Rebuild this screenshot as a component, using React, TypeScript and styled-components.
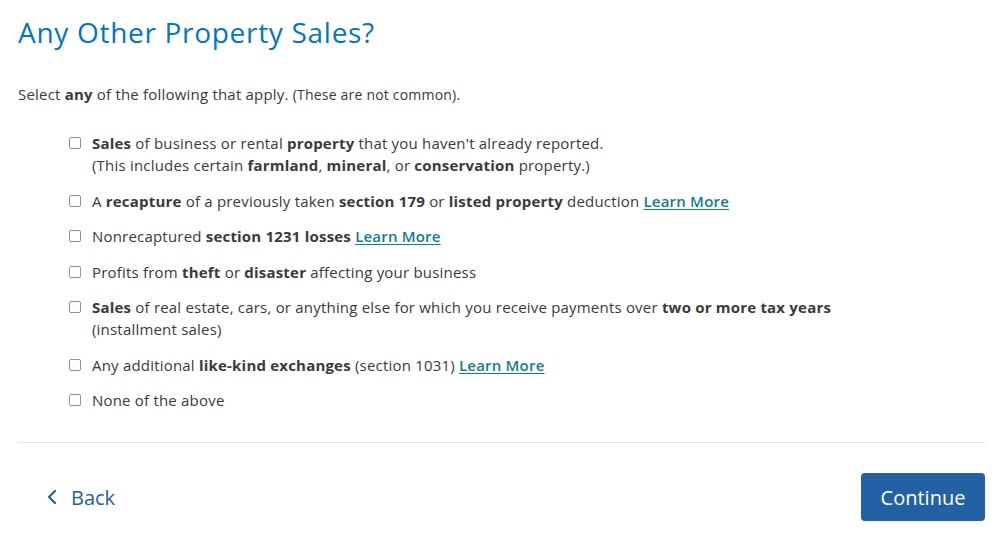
import React from 'react';
import styled, {createGlobalStyle} from 'styled-components';

const GlobalStyle = createGlobalStyle`
  html, body {
    margin: 0;
    padding: 0;
    background: #ffffff;
  }
  body {
    font-family: "Open Sans", "Liberation Sans", sans-serif;
    color: #393a3d;
  }
`;

const Page = styled.div`
  width: 995px;
  height: 544px;
  box-sizing: border-box;
  padding: 12px 10px 0 18px;
  display: flex;
  flex-direction: column;
`;

const Title = styled.h1`
  margin: 0;
  font-size: 28px;
  line-height: 40px;
  font-weight: 400;
  letter-spacing: 0.7px;
  color: #0077c5;
`;

const Intro = styled.p`
  margin: 31px 0 0;
  font-size: 15px;
  line-height: 22px;
  letter-spacing: 0.2px;
`;

const Note = styled.span`
  font-size: 14px;
`;

const List = styled.ul`
  list-style: none;
  margin: 26px 0 0;
  padding: 0 0 0 51px;
  display: flex;
  flex-direction: column;
  gap: 13.5px;
`;

const Item = styled.li`
  display: flex;
  align-items: flex-start;
  gap: 11px;
  font-size: 15px;
  line-height: 22px;
  letter-spacing: 0.2px;
`;

const Box = styled.span`
  flex: none;
  width: 10px;
  height: 10px;
  margin-top: 5px;
  border: 1.5px solid #8d9096;
  border-radius: 2px;
  background: #fff;
`;

const Link = styled.a`
  color: #0d7f8f;
  font-weight: 600;
  text-decoration: underline;
  text-underline-offset: 2px;
  cursor: pointer;
`;

const Divider = styled.hr`
  margin: 31px 0 0;
  border: 0;
  border-top: 1px solid #e4e4e4;
`;

const Footer = styled.div`
  display: flex;
  justify-content: space-between;
  align-items: center;
  margin-top: 30px;
`;

const BackButton = styled.button`
  display: flex;
  align-items: center;
  gap: 14px;
  margin-left: 29px;
  padding: 0;
  border: 0;
  background: none;
  color: #235e9c;
  font-family: inherit;
  font-size: 20px;
  font-weight: 500;
  cursor: pointer;
`;

const ContinueButton = styled.button`
  width: 124px;
  height: 48px;
  border: 0;
  border-radius: 4px;
  background: #2262a4;
  color: #fff;
  font-family: inherit;
  font-size: 20px;
  cursor: pointer;
`;

const Chevron = () => (
  <svg width="10" height="16" viewBox="0 0 10 16" fill="none">
    <path d="M8 2L2 8l6 6" stroke="currentColor" strokeWidth="2.2" strokeLinecap="round" strokeLinejoin="round" />
  </svg>
);

const App = () => {
  return (
    <Page>
      <GlobalStyle />
      <Title>Any Other Property Sales?</Title>
      <Intro>
        Select <b>any</b> of the following that apply. <Note>(These are not common).</Note>
      </Intro>
      <List>
        <Item>
          <Box />
          <span>
            <b>Sales</b> of business or rental <b>property</b> that you haven't already reported.
            <br />
            (This includes certain <b>farmland</b>, <b>mineral</b>, or <b>conservation</b> property.)
          </span>
        </Item>
        <Item>
          <Box />
          <span>
            A <b>recapture</b> of a previously taken <b>section 179</b> or <b>listed property</b> deduction{' '}
            <Link>Learn More</Link>
          </span>
        </Item>
        <Item>
          <Box />
          <span>
            Nonrecaptured <b>section 1231 losses</b> <Link>Learn More</Link>
          </span>
        </Item>
        <Item>
          <Box />
          <span>
            Profits from <b>theft</b> or <b>disaster</b> affecting your business
          </span>
        </Item>
        <Item>
          <Box />
          <span>
            <b>Sales</b> of real estate, cars, or anything else for which you receive payments over{' '}
            <b>two or more tax years</b>
            <br />
            (installment sales)
          </span>
        </Item>
        <Item>
          <Box />
          <span>
            Any additional <b>like-kind exchanges</b> (section 1031) <Link>Learn More</Link>
          </span>
        </Item>
        <Item>
          <Box />
          <span>None of the above</span>
        </Item>
      </List>
      <Divider />
      <Footer>
        <BackButton>
          <Chevron />
          Back
        </BackButton>
        <ContinueButton>Continue</ContinueButton>
      </Footer>
    </Page>
  );
};

export default App;
